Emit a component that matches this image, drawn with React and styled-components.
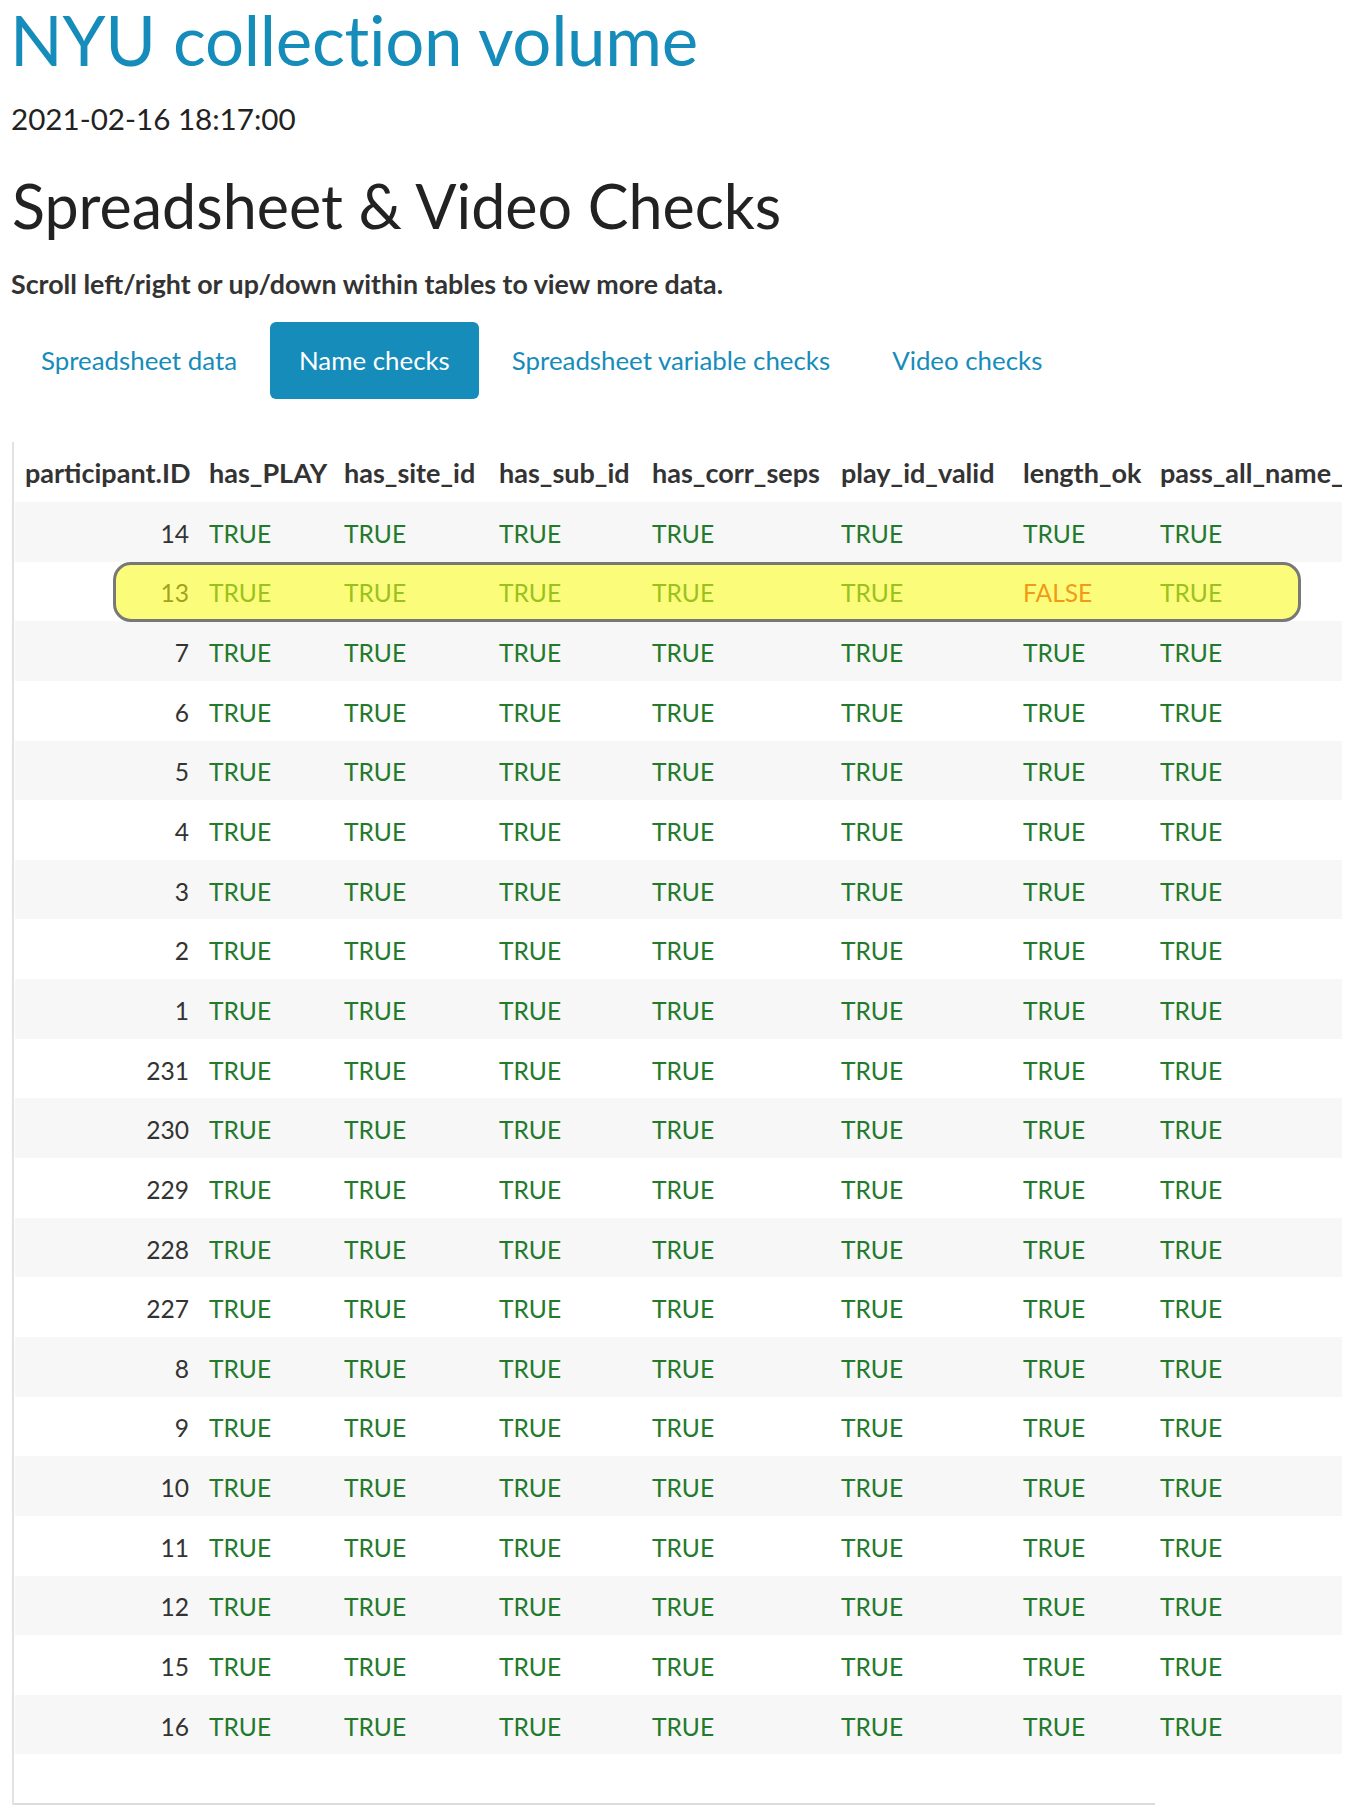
import React from "react";
import styled, { createGlobalStyle } from "styled-components";

const GlobalStyle = createGlobalStyle`
  html, body {
    margin: 0;
    padding: 0;
    background: #ffffff;
  }
  body {
    font-family: Lato, "Open Sans", "Liberation Sans", sans-serif;
    color: #222222;
    overflow: hidden;
  }
`;

const Page = styled.div`
  width: 1355px;
  padding: 0 0 0 10px;
  box-sizing: border-box;
`;

const Title = styled.h1`
  margin: 3px 0 0;
  font-size: 69px;
  line-height: 74px;
  font-weight: 400;
  color: #158cba;
  letter-spacing: -0.3px;
`;

const DateLine = styled.p`
  margin: 24px 0 0 1px;
  font-size: 29.6px;
  line-height: 36px;
  color: #222;
`;

const SectionHeading = styled.h2`
  margin: 34px 0 0 2px;
  font-size: 61px;
  line-height: 70px;
  font-weight: 400;
  color: #222;
`;

const Hint = styled.p`
  margin: 28px 0 0 1px;
  font-size: 26.8px;
  line-height: 30px;
  font-weight: 700;
  color: #333;
`;

const TabBar = styled.nav`
  display: flex;
  gap: 4px;
  margin: 23px 0 0 2px;
`;

const Tab = styled.a`
  display: block;
  height: 77px;
  padding: 0 29px;
  border-radius: 6px;
  font-size: 25.85px;
  line-height: 77px;
  text-decoration: none;
  color: ${(p) => (p.$active ? "#ffffff" : "#158cba")};
  background: ${(p) => (p.$active ? "#158cba" : "transparent")};
  cursor: pointer;
`;

const TableFrame = styled.div`
  margin: 43px 0 0 2px;
  width: 1330px;
  border-left: 2px solid #e2e2e2;
  box-sizing: border-box;
`;

const Scroller = styled.div`
  position: relative;
  overflow: hidden;
  padding-left: 1px;
`;

const Table = styled.table`
  table-layout: fixed;
  border-collapse: collapse;
  border-spacing: 0;
  width: 1395px;
  font-size: 24.6px;
`;

const HeadCell = styled.th`
  height: 60px;
  padding: 0 10px;
  text-align: ${(p) => (p.$num ? "right" : "left")};
  font-size: 27px;
  font-weight: 700;
  color: #333;
  white-space: nowrap;
  overflow: hidden;
  vertical-align: middle;
`;

const Row = styled.tr`
  height: 59.65px;
  background: ${(p) => (p.$odd ? "#f7f7f7" : "#ffffff")};
`;

const Cell = styled.td`
  padding: 3px 10px 0;
  text-align: ${(p) => (p.$num ? "right" : "left")};
  color: ${(p) => (p.$num ? "#333333" : p.$bad ? "#e8201c" : "#237a2c")};
  white-space: nowrap;
  vertical-align: middle;
`;

const Highlight = styled.div`
  position: absolute;
  left: 99px;
  top: 120px;
  width: 1188px;
  height: 60px;
  box-sizing: border-box;
  border: 3px solid #787878;
  border-radius: 18px;
  background: rgba(250, 250, 20, 0.56);
  pointer-events: none;
`;

const ScrollTrack = styled.div`
  margin-top: 49px;
  height: 2px;
`;

const ScrollThumb = styled.div`
  width: 1141px;
  height: 2px;
  background: #dcdcdc;
`;

const columns = [
  { key: "id", label: "participant.ID", width: 184, num: true },
  { key: "play", label: "has_PLAY", width: 135 },
  { key: "site", label: "has_site_id", width: 155 },
  { key: "sub", label: "has_sub_id", width: 153 },
  { key: "seps", label: "has_corr_seps", width: 189 },
  { key: "valid", label: "play_id_valid", width: 182 },
  { key: "len", label: "length_ok", width: 137 },
  { key: "pass", label: "pass_all_name_checks", width: 260 },
];

const ids = [14, 13, 7, 6, 5, 4, 3, 2, 1, 231, 230, 229, 228, 227, 8, 9, 10, 11, 12, 15, 16];

const rows = ids.map((id) => ({
  id,
  play: true,
  site: true,
  sub: true,
  seps: true,
  valid: true,
  len: id !== 13,
  pass: true,
}));

export default function App() {
  return (
    <>
      <GlobalStyle />
      <Page>
        <Title>NYU collection volume</Title>
        <DateLine>2021-02-16 18:17:00</DateLine>
        <SectionHeading>Spreadsheet &amp; Video Checks</SectionHeading>
        <Hint>Scroll left/right or up/down within tables to view more data.</Hint>
        <TabBar>
          <Tab>Spreadsheet data</Tab>
          <Tab $active>Name checks</Tab>
          <Tab>Spreadsheet variable checks</Tab>
          <Tab>Video checks</Tab>
        </TabBar>
        <TableFrame>
          <Scroller>
            <Table>
              <colgroup>
                {columns.map((c) => (
                  <col key={c.key} style={{ width: c.width }} />
                ))}
              </colgroup>
              <thead>
                <tr>
                  {columns.map((c) => (
                    <HeadCell key={c.key} $num={c.num}>
                      {c.label}
                    </HeadCell>
                  ))}
                </tr>
              </thead>
              <tbody>
                {rows.map((r, i) => (
                  <Row key={r.id} $odd={i % 2 === 0}>
                    {columns.map((c) =>
                      c.num ? (
                        <Cell key={c.key} $num>
                          {r[c.key]}
                        </Cell>
                      ) : (
                        <Cell key={c.key} $bad={!r[c.key]}>
                          {r[c.key] ? "TRUE" : "FALSE"}
                        </Cell>
                      )
                    )}
                  </Row>
                ))}
              </tbody>
            </Table>
            <Highlight />
          </Scroller>
          <ScrollTrack>
            <ScrollThumb />
          </ScrollTrack>
        </TableFrame>
      </Page>
    </>
  );
}
